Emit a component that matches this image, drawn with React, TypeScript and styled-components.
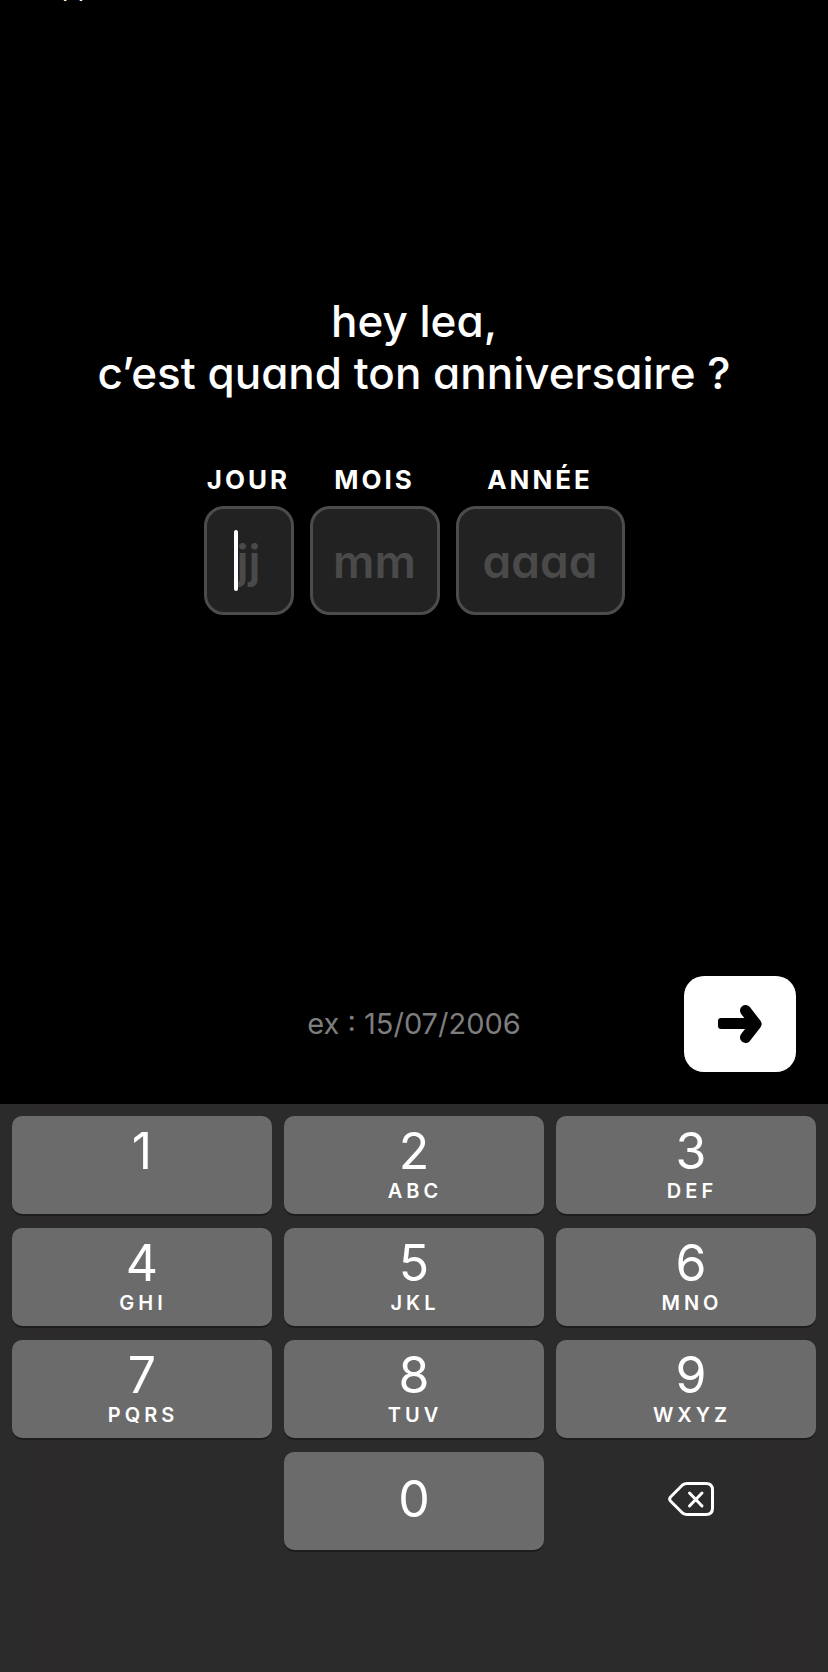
import React from "react";
import styled, { createGlobalStyle } from "styled-components";

const GlobalStyle = createGlobalStyle`
  * { box-sizing: border-box; }
  body {
    margin: 0;
    background: #000;
    color: #fff;
    font-family: Inter, "Liberation Sans", sans-serif;
  }
  button, input { font: inherit; color: inherit; margin: 0; }
`;

const Screen = styled.div`
  min-height: 100vh;
  display: flex;
  flex-direction: column;
  font-feature-settings: "cv11";
`;

const StatusBar = styled.header`
  height: 2px;
  overflow: hidden;
  display: flex;
  align-items: flex-end;
  padding-left: 44px;
`;

const BackLink = styled.a`
  color: #fff;
  font-size: 26px;
  line-height: 30px;
  text-decoration: none;
`;

const Form = styled.form`
  flex: 1;
  display: flex;
  flex-direction: column;
  align-items: center;
  padding: 293px 32px 32px;
`;

const Title = styled.h1`
  margin: 0 0 63px;
  font-size: 44px;
  line-height: 52px;
  font-weight: 500;
  text-align: center;
`;

const Fields = styled.div`
  display: flex;
  justify-content: center;
  gap: 16px;
`;

const Field = styled.div`
  display: flex;
  flex-direction: column;
  align-items: center;
  gap: 8px;
`;

const FieldLabel = styled.label`
  font-size: 26px;
  line-height: 36px;
  font-weight: 700;
  letter-spacing: 3px;
`;

const InputBox = styled.div`
  position: relative;
`;

const DateInput = styled.input<{ $width: number }>`
  display: block;
  width: ${(p) => p.$width}px;
  height: 109px;
  padding: 0;
  border: 3px solid #4c4c4c;
  border-radius: 20px;
  background: #222;
  font-size: 46px;
  font-weight: 600;
  text-align: center;
  outline: none;
  &::placeholder { color: #4a4a4a; opacity: 1; }
`;

const Caret = styled.span`
  position: absolute;
  left: 30px;
  top: 24px;
  width: 4px;
  height: 61px;
  border-radius: 2px;
  background: #fff;
`;

const Footer = styled.div`
  align-self: stretch;
  margin-top: auto;
  display: grid;
  grid-template-columns: 1fr auto 1fr;
  align-items: center;
`;

const Hint = styled.p`
  grid-column: 2;
  margin: 0;
  color: #7e7e7e;
  font-size: 29px;
  line-height: 36px;
`;

const NextButton = styled.button`
  justify-self: end;
  display: flex;
  align-items: center;
  justify-content: center;
  width: 112px;
  height: 96px;
  padding: 0;
  border: 0;
  border-radius: 20px;
  background: #fff;
`;

const Keyboard = styled.section`
  display: grid;
  grid-template-columns: repeat(3, 1fr);
  grid-auto-rows: 98px;
  gap: 14px 12px;
  padding: 12px 12px 122px;
  background: linear-gradient(90deg, #2b2b2b 0 25px, #2d2a2b 26px 80px, #2b2b2b 81px calc(100% - 80px), #2d2a2b calc(100% - 79px) calc(100% - 16px), #2b2b2b calc(100% - 15px));
`;

const Key = styled.button<{ $plain?: boolean }>`
  display: flex;
  flex-direction: column;
  align-items: center;
  justify-content: center;
  padding: 0;
  border: 0;
  border-radius: 10px;
  background: ${(p) => (p.$plain ? "transparent" : "#6b6b6b")};
  box-shadow: ${(p) => (p.$plain ? "none" : "0 2px 0 #1d1d1d")};
  &:nth-child(3n) { padding-left: 10px; }
  &:nth-child(n + 10) { padding-bottom: 4px; }
`;

const Digit = styled.span`
  font-size: 50px;
  line-height: 52px;
`;

const Letters = styled.span`
  height: 28px;
  font-size: 20px;
  line-height: 28px;
  font-weight: 600;
  letter-spacing: 4px;
  padding-left: 2px;
`;

const fields = [
  { id: "day", label: "JOUR", hint: "jj", width: 90 },
  { id: "month", label: "MOIS", hint: "mm", width: 130 },
  { id: "year", label: "ANNÉE", hint: "aaaa", width: 169 },
];

const keys: [string, string][] = [
  ["1", ""], ["2", "ABC"], ["3", "DEF"],
  ["4", "GHI"], ["5", "JKL"], ["6", "MNO"],
  ["7", "PQRS"], ["8", "TUV"], ["9", "WXYZ"],
];

const ArrowIcon = () => (
  <svg width="44" height="40" viewBox="0 0 44 40" aria-hidden="true">
    <rect x="0" y="14" width="34" height="11" rx="3" />
    <path d="M27.5 6.5 L38 20 L27.5 33.5" fill="none" stroke="#000" strokeWidth="11" strokeLinecap="round" strokeLinejoin="round" />
    <path d="M24 14 L38 20 L24 25 Z" />
  </svg>
);

const BackspaceIcon = () => (
  <svg width="46" height="34" viewBox="0 0 46 34" fill="none" stroke="#fff" strokeWidth="3" strokeLinecap="round" strokeLinejoin="round" aria-hidden="true">
    <path d="M19 1.500 H38 Q44.500 1.500 44.500 8 V26 Q44.500 32.500 38 32.500 H19 Q16.500 32.500 14.500 31 L2.500 19 Q0.800 17 2.500 15 L14.500 3 Q16.500 1.500 19 1.500 Z" />
    <path d="M21.500 11 L34 24 M34 11 L21.500 24" />
  </svg>
);

export default function App() {
  return (
    <>
      <GlobalStyle />
      <Screen>
        <StatusBar>
          <BackLink href="#">App Store</BackLink>
        </StatusBar>
        <Form onSubmit={(e) => e.preventDefault()}>
          <Title>
            hey lea,
            <br />
            c’est quand ton anniversaire ?
          </Title>
          <Fields>
            {fields.map((f) => (
              <Field key={f.id}>
                <FieldLabel htmlFor={f.id}>{f.label}</FieldLabel>
                <InputBox>
                  <DateInput id={f.id} inputMode="numeric" placeholder={f.hint} $width={f.width} />
                  {f.id === "day" && <Caret />}
                </InputBox>
              </Field>
            ))}
          </Fields>
          <Footer>
            <Hint>ex : 15/07/2006</Hint>
            <NextButton type="submit" aria-label="Continuer">
              <ArrowIcon />
            </NextButton>
          </Footer>
        </Form>
        <Keyboard aria-label="Clavier">
          {keys.map(([digit, letters]) => (
            <Key key={digit} type="button">
              <Digit>{digit}</Digit>
              <Letters>{letters}</Letters>
            </Key>
          ))}
          <span />
          <Key type="button">
            <Digit>0</Digit>
          </Key>
          <Key type="button" $plain aria-label="Effacer">
            <BackspaceIcon />
          </Key>
        </Keyboard>
      </Screen>
    </>
  );
}
